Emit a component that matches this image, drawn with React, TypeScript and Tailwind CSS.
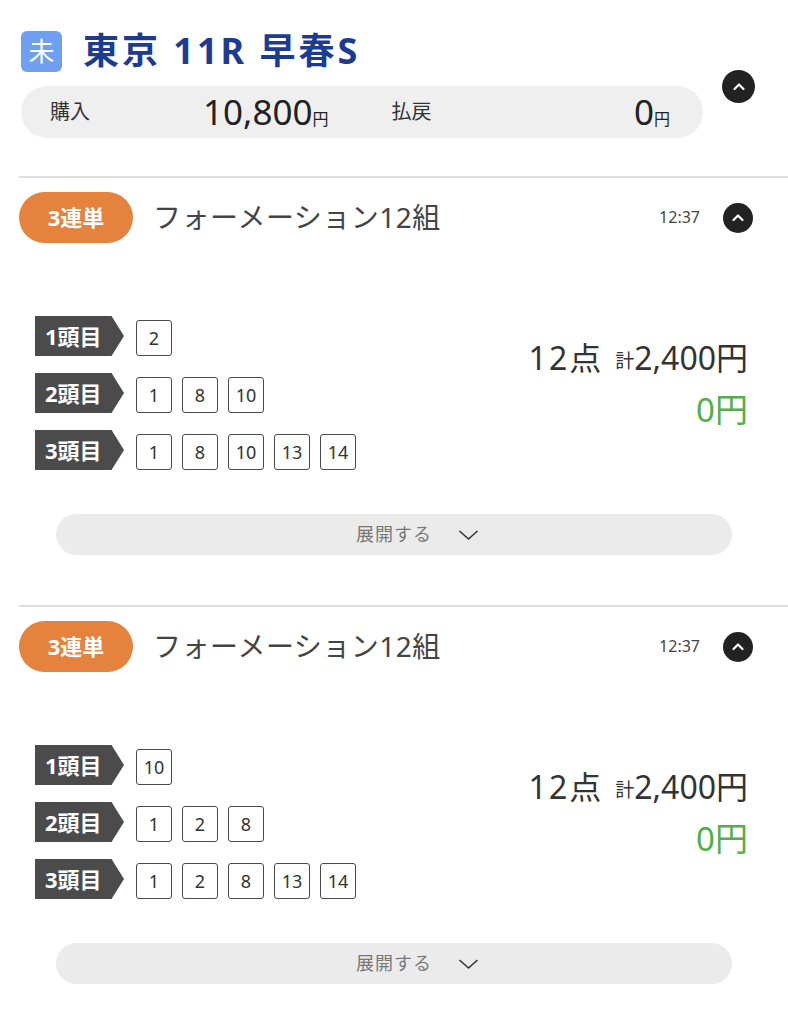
import React from "react";

function UpCircle({ size }: { size: "lg" | "sm" }) {
  return (
    <div
      className={
        size === "lg"
          ? "w-[33px] h-[33px] rounded-full bg-[#222222] flex items-center justify-center shrink-0"
          : "w-[30px] h-[30px] rounded-full bg-[#222222] flex items-center justify-center shrink-0"
      }
    >
      <svg width="16" height="16" viewBox="0 0 16 16" fill="none">
        <polyline
          points="3.5,10 8,5.5 12.5,10"
          stroke="white"
          strokeWidth="2.2"
          strokeLinecap="round"
          strokeLinejoin="round"
        />
      </svg>
    </div>
  );
}

function NumBox({ n }: { n: number }) {
  return (
    <div className="w-[36px] h-[36px] border-[1.5px] border-[#4a4a4a] rounded-[3px] flex items-center justify-center text-[18px] text-[#333333] leading-none">
      {n}
    </div>
  );
}

function Row({ label, nums }: { label: string; nums: number[] }) {
  return (
    <div className="flex items-center h-[40px]">
      <div className="w-[89px] h-[40px] bg-[#4b4b4b] text-white font-bold text-[22px] leading-none flex items-center pl-[10px] [clip-path:polygon(0_0,86%_0,100%_50%,86%_100%,0_100%)]">
        {label}
      </div>
      <div className="flex gap-[10px] ml-[12px] mt-[4px]">
        {nums.map((n, i) => (
          <NumBox key={i} n={n} />
        ))}
      </div>
    </div>
  );
}

function Section({ rows }: { rows: number[][] }) {
  const labels = ["1頭目", "2頭目", "3頭目"];
  return (
    <div className="border-t-2 border-[#dddddd] pt-[14px] pb-[50px]">
      <div className="flex items-center h-[51px]">
        <div className="w-[114px] h-[51px] rounded-full bg-[#e5823d] text-white font-bold text-[22px] flex items-center justify-center">
          3連単
        </div>
        <div className="ml-[20px] text-[28px] text-[#444444] tracking-[0.5px] -mt-[2px]">
          フォーメーション12組
        </div>
        <div className="ml-auto text-[16px] text-[#444444] -mt-[2px]">12:37</div>
        <div className="ml-[23px] mr-[35px]">
          <UpCircle size="sm" />
        </div>
      </div>
      <div className="flex mt-[73px] pl-[16px] pr-[40px]">
        <div className="flex flex-col gap-[17px]">
          {rows.map((r, i) => (
            <Row key={i} label={labels[i]} nums={r} />
          ))}
        </div>
        <div className="ml-auto mt-[22px] flex flex-col items-end">
          <div className="h-[40px] flex items-center text-[#333333]">
            <span className="text-[32px] tracking-[2px]">12点</span>
            <span className="text-[19px] ml-[12px] mt-[6px]">計</span>
            <span className="text-[32px]">2,400円</span>
          </div>
          <div className="h-[40px] mt-[12px] flex items-center text-[33px] text-[#55ae48]">0円</div>
        </div>
      </div>
      <div className="mt-[44px] ml-[37px] mr-[56px] h-[41px] rounded-full bg-[#ebebeb] flex items-center justify-center">
        <span className="relative text-[18px] text-[#777777] tracking-[1px]">
          展開する
          <svg
            className="absolute left-full top-1/2 -translate-y-1/2 ml-[26px]"
            width="21"
            height="12"
            viewBox="0 0 21 12"
            fill="none"
          >
            <polyline points="1.5,2 10.5,10 19.5,2" stroke="#333333" strokeWidth="1.6" strokeLinejoin="round" />
          </svg>
        </span>
      </div>
    </div>
  );
}

export default function App() {
  return (
    <div className="w-[788px] min-h-[1024px] bg-white font-['Noto_Sans','Noto_Sans_CJK_JP',sans-serif]">
      <div className="flex pt-[31px] pl-[21px]">
        <div className="w-[682px]">
          <div className="flex items-center h-[41px]">
            <div className="w-[41px] h-[41px] rounded-[6px] bg-[#6f9ff0] text-white text-[26px] flex items-center justify-center">
              未
            </div>
            <div className="ml-[21px] text-[36px] font-bold text-[#1b3c91] tracking-[3px] -mt-[2px] whitespace-nowrap">
              東京 11R 早春S
            </div>
          </div>
          <div className="mt-[14px] h-[52px] rounded-full bg-[#efefef] pl-[29px] pr-[33px] grid grid-cols-2 gap-[63px] items-center">
            <div className="flex items-center justify-between">
              <span className="text-[20px] text-[#333333]">購入</span>
              <span className="text-[#222222]">
                <span className="text-[35px]">10,800</span>
                <span className="text-[16px]">円</span>
              </span>
            </div>
            <div className="flex items-center justify-between">
              <span className="text-[20px] text-[#333333]">払戻</span>
              <span className="text-[#222222]">
                <span className="text-[35px]">0</span>
                <span className="text-[16px]">円</span>
              </span>
            </div>
          </div>
        </div>
        <div className="ml-[19px] mt-[39px]">
          <UpCircle size="lg" />
        </div>
      </div>
      <div className="ml-[19px] mt-[38px]">
        <Section rows={[[2], [1, 8, 10], [1, 8, 10, 13, 14]]} />
        <Section rows={[[10], [1, 2, 8], [1, 2, 8, 13, 14]]} />
      </div>
    </div>
  );
}
